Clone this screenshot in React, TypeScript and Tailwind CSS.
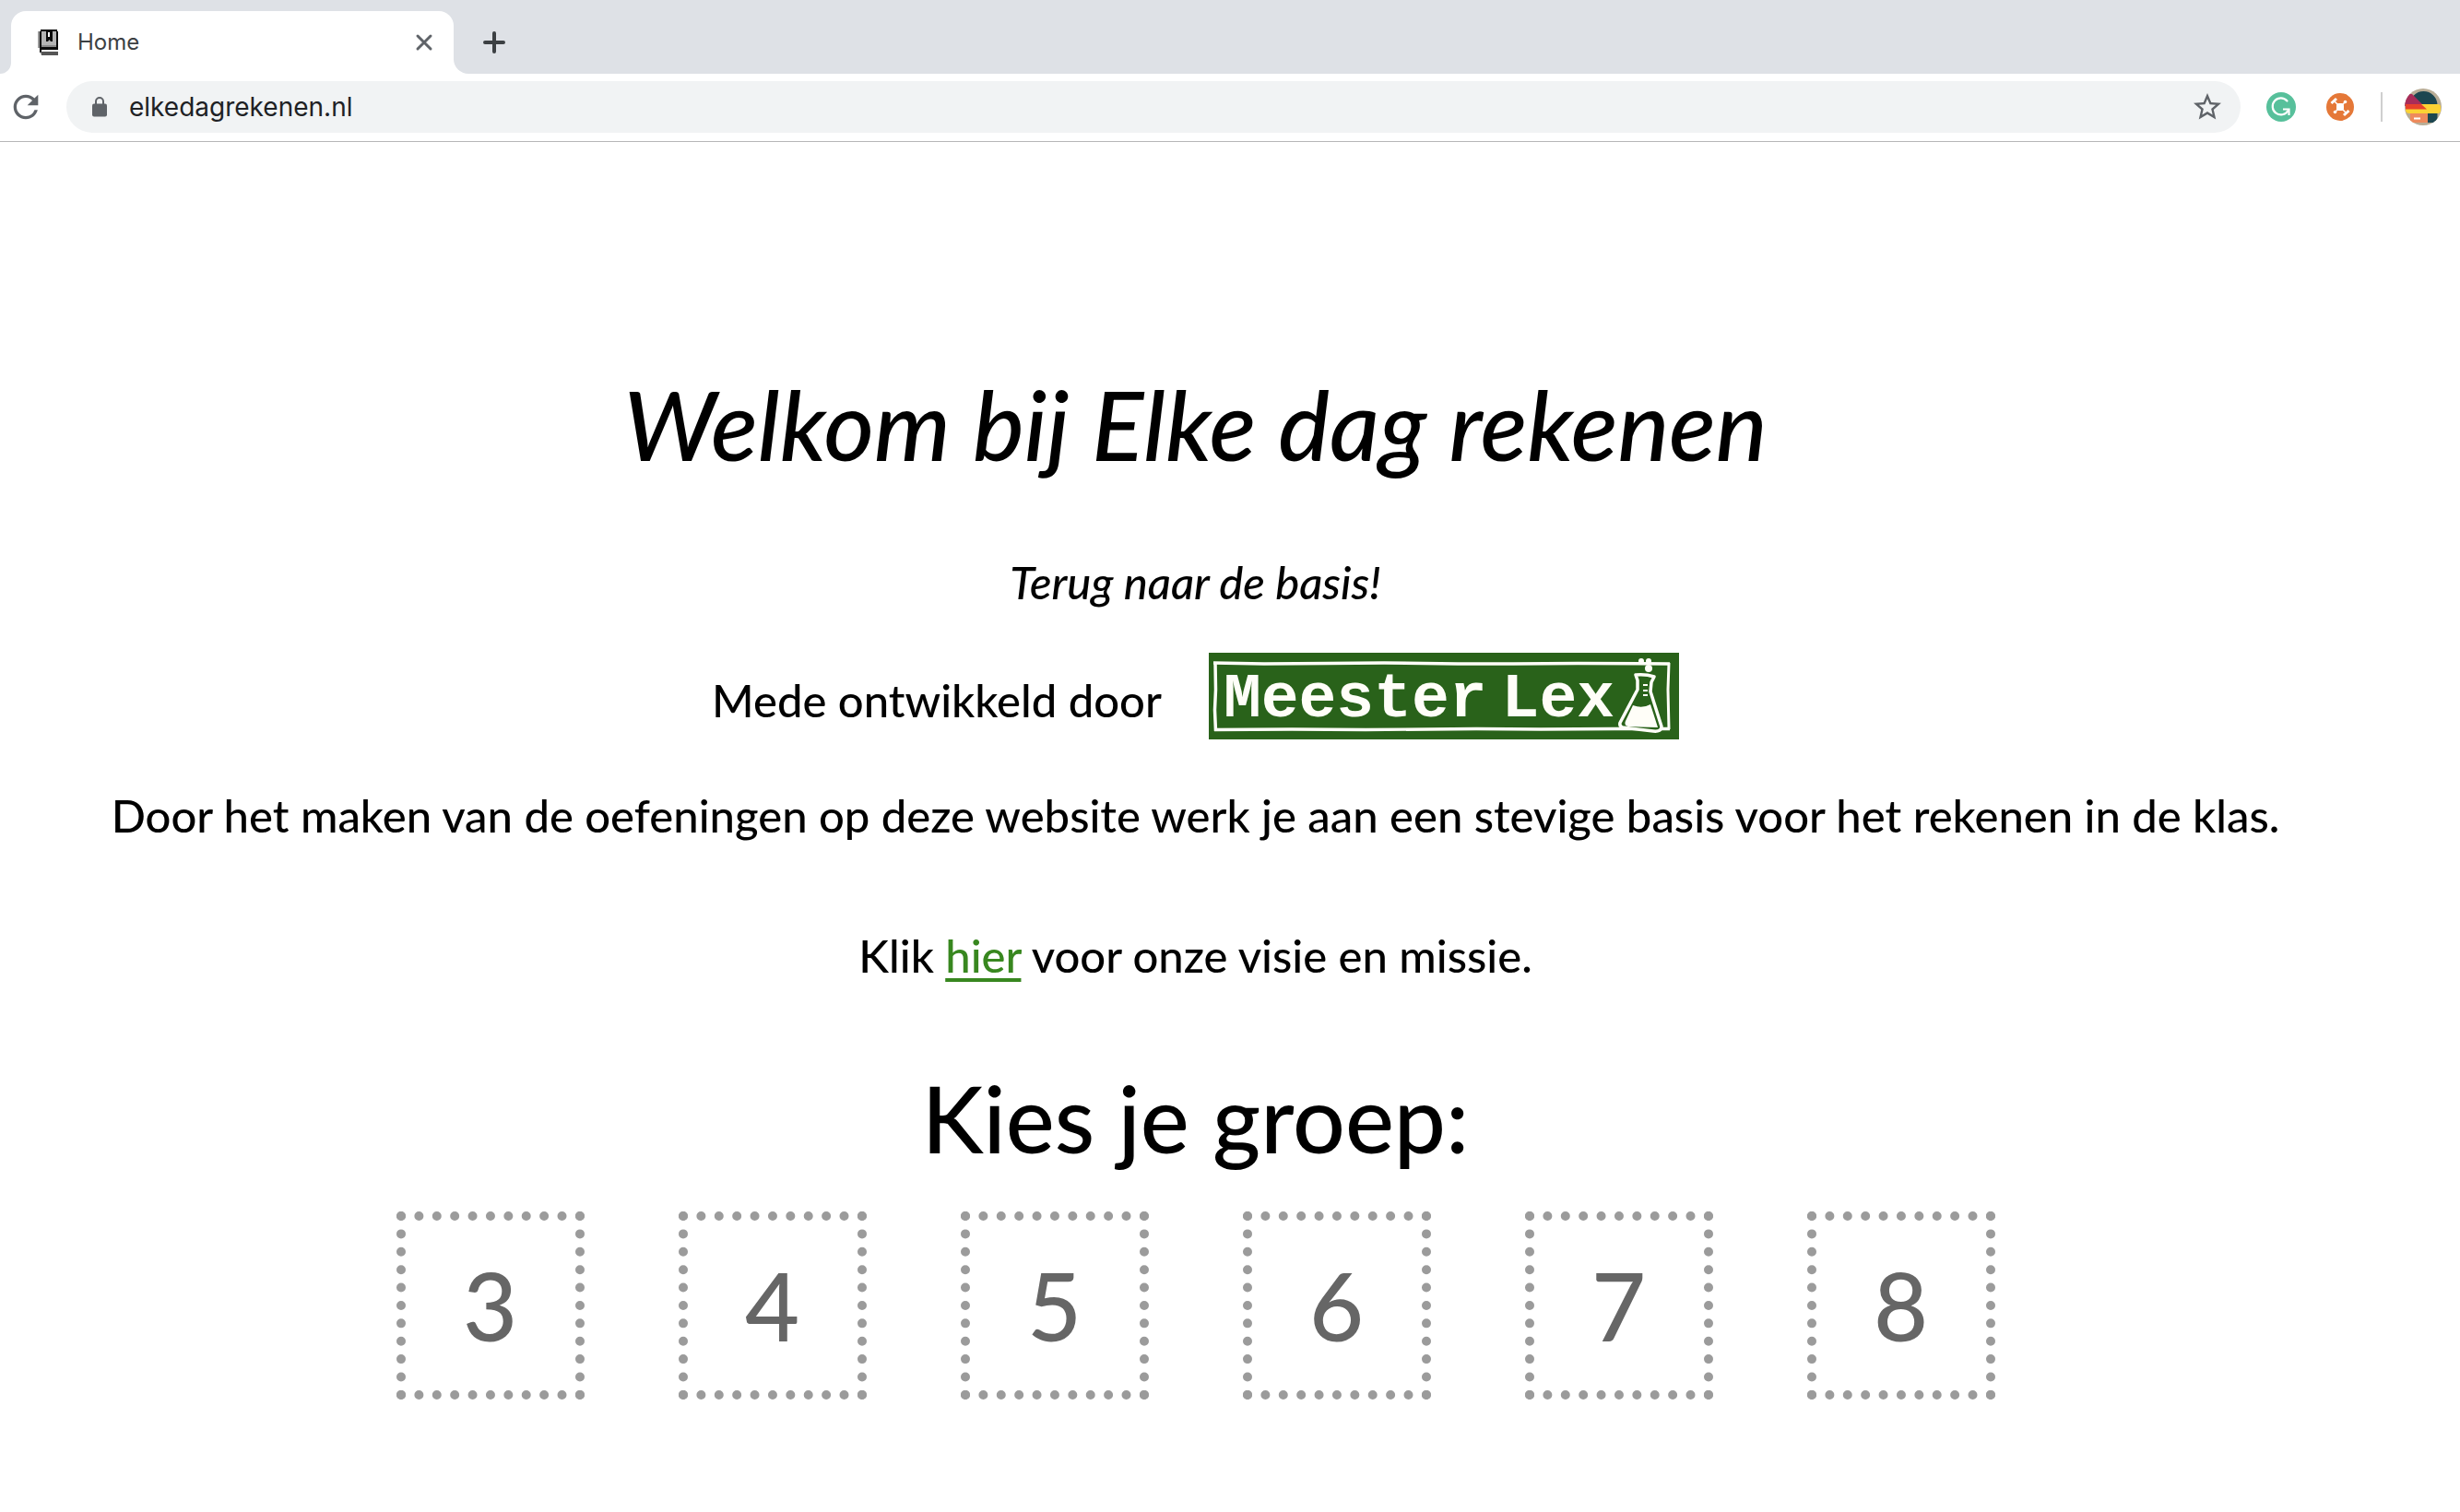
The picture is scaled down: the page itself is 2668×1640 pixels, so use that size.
import { MdRefresh, MdStarBorder } from "react-icons/md";

const groups = [3, 4, 5, 6, 7, 8];

function BookIcon() {
  return (
    <svg viewBox="0 0 24 28" className="h-7 w-6" aria-hidden="true">
      <path d="M1 2h2v18H1z" fill="#999" />
      <path d="M4 0h18v2h1v20H5v3H3V2h1z" fill="#0a0a0a" />
      <path d="M5 2h16v17H5z" fill="#b4b4b4" />
      <path d="M5 17h16v2H5z" fill="#8a8a8a" />
      <path d="M10 1h7v12h-2l-1.500-2-1.500 2h-2z" fill="#0a0a0a" />
      <path d="M12 3h2v5h-2z" fill="#fff" />
      <path d="M5 22h18v2H5z" fill="#f4f4f4" />
      <path d="M4 24h19v4H5z" fill="#555" />
    </svg>
  );
}

function LockIcon() {
  return (
    <svg viewBox="0 0 16 22" className="h-[22px] w-4 shrink-0" aria-hidden="true">
      <rect x="0" y="7.500" width="16" height="14" rx="2" fill="#5f6368" />
      <path d="M4 8V5a4 4 0 0 1 8 0v3" fill="none" stroke="#5f6368" strokeWidth="2" />
    </svg>
  );
}

function GrammarIcon() {
  return (
    <svg viewBox="0 0 32 32" className="size-8" aria-hidden="true">
      <circle cx="16" cy="16" r="16" fill="#57c09b" />
      <path d="M22.500 9.500A9 9 0 1 0 23.500 20" fill="none" stroke="#fff" strokeWidth="2.200" strokeLinecap="round" />
      <path d="M18 18.500h6.500V25" fill="none" stroke="#fff" strokeWidth="2.200" />
    </svg>
  );
}

function DroneIcon() {
  return (
    <svg viewBox="0 0 30 30" className="size-[30px]" aria-hidden="true">
      <circle cx="15" cy="15" r="15" fill="#e57838" />
      <path d="M8 8l14 14M20 10L10 20" stroke="#fff" strokeWidth="1.500" />
      <rect x="11" y="11" width="8" height="8" rx="2.500" fill="#fff" />
      <path d="M5.500 11l5.500-5M19 24l5.500-5" stroke="#fff" strokeWidth="3" />
      <circle cx="20.500" cy="9.500" r="1.800" fill="#fff" />
      <circle cx="9.500" cy="20.500" r="1.800" fill="#fff" />
    </svg>
  );
}

function Avatar() {
  return (
    <svg viewBox="0 0 40 40" className="size-10" aria-hidden="true">
      <defs>
        <clipPath id="avatar-circle">
          <circle cx="20" cy="20" r="20" />
        </clipPath>
      </defs>
      <g clipPath="url(#avatar-circle)">
        <rect width="40" height="40" fill="#b9ad96" />
        <path d="M5.500 18a15 15 0 0 1 30 0v19H24V18z" fill="#1c4650" />
        <path d="M6 25h19v12H6z" fill="#ee8a5c" />
        <path d="M0 6h8l13 13H0z" fill="#a92c59" />
        <path d="M5 17h31q3 0 3 3v4q0 3-3 3H5q-4 0-4-4v-2q0-4 4-4z" fill="#fbd234" />
        <path d="M1 17h17l6 5.500H1z" fill="#e8422b" />
        <path d="M10 32.500h7" stroke="#fff" strokeWidth="1.800" />
      </g>
    </svg>
  );
}

function MeesterLexLogo() {
  return (
    <a
      href="#meester-lex"
      className="relative flex h-[94px] w-[510px] items-center gap-4 bg-[#29621a] pt-2 pl-4 font-['Liberation_Mono',monospace] text-[68px] leading-none font-bold text-[#fffef8]"
    >
      <span>Meester</span>
      <span>Lex</span>
      <svg viewBox="0 0 510 94" className="absolute inset-0 h-full w-full" fill="none" stroke="#fffef8" aria-hidden="true">
        <path d="M5 11L60 12 130 11.500 190 11 270 12 330 12 400 11.500 500 12" strokeWidth="3.500" />
        <path d="M6 83.500L90 83 170 83.500 290 82.500 360 83 440 82.500 500 82.500" strokeWidth="3.500" />
        <path d="M7 10L7.500 40 6.500 62 7.500 85" strokeWidth="3.500" />
        <path d="M499 11L498 40 499 83" strokeWidth="3" />
        <path d="M463 24Q474 23 483 26L480 32 479 42 491 80Q491 86 482 85L449 81Q445 80 446 76L465 40 465 30Z" fill="#29621a" strokeWidth="3.500" strokeLinejoin="round" />
        <path d="M460 57Q470 61 479 56L487 81 455 80Q450 79 452 74Z" fill="#fffef8" stroke="none" />
        <path d="M471 35h5M471 41h5M471 46h5" strokeWidth="2" />
        <circle cx="477" cy="17" r="4" fill="#fffef8" stroke="none" />
        <circle cx="469" cy="9" r="3" fill="#fffef8" stroke="none" />
        <circle cx="477" cy="9" r="3" fill="#fffef8" stroke="none" />
      </svg>
    </a>
  );
}

export default function App() {
  return (
    <div className="min-h-screen bg-white">
      <header className="font-[Inter,sans-serif]">
        <div className="flex h-20 items-end bg-[#dee1e6]">
          <div className="flex h-[68px] w-3 bg-white">
            <div className="flex-1 rounded-br-[16px] bg-[#dee1e6]" />
          </div>
          <div className="flex h-[68px] w-[480px] items-center rounded-t-[16px] bg-white pr-[22px] pl-7">
            <BookIcon />
            <span className="ml-5 flex-1 text-2xl text-[#3c4043]">Home</span>
            <button type="button" aria-label="Sluit tabblad">
              <svg viewBox="0 0 20 20" className="size-5" stroke="#5f6368" strokeWidth="3" strokeLinecap="round">
                <path d="M3 3l14 14M17 3L3 17" />
              </svg>
            </button>
          </div>
          <div className="flex h-[68px] flex-1 bg-white">
            <div className="flex flex-1 items-center rounded-bl-[16px] bg-[#dee1e6] pl-8">
              <button type="button" aria-label="Nieuw tabblad">
                <svg viewBox="0 0 24 24" className="size-6" stroke="#3c4043" strokeWidth="4" strokeLinecap="round">
                  <path d="M12 2v20M2 12h20" />
                </svg>
              </button>
            </div>
          </div>
        </div>
        <div className="flex h-[74px] items-center border-b border-[#b6b6b8] pr-5 pb-px pl-2">
          <button type="button" aria-label="Vernieuwen">
            <MdRefresh className="size-10 text-[#5f6368]" />
          </button>
          <div className="ml-6 flex h-14 flex-1 items-center rounded-full bg-[#f1f3f4] pr-[18px] pl-7">
            <LockIcon />
            <input
              type="text"
              aria-label="Adres"
              defaultValue="elkedagrekenen.nl"
              className="ml-6 min-w-0 flex-1 bg-transparent text-[28px] text-[#202124] outline-none"
            />
            <button type="button" aria-label="Bladwijzer">
              <MdStarBorder className="size-9 text-[#5f6368]" />
            </button>
          </div>
          <button type="button" aria-label="Schrijfhulp" className="ml-7">
            <GrammarIcon />
          </button>
          <button type="button" aria-label="Extensie" className="ml-[33px]">
            <DroneIcon />
          </button>
          <div className="ml-[29px] h-8 w-[2px] bg-[#cfcfcf]" />
          <button type="button" aria-label="Profiel" className="ml-6">
            <Avatar />
          </button>
        </div>
      </header>

      <main className="flex flex-col items-center pr-[75px] text-center font-[Lato,sans-serif] text-[49px] leading-[62px] font-medium text-black">
        <h1 className="mt-[244px] text-[105px] leading-[122px] italic">Welkom bij Elke dag rekenen</h1>
        <p className="mt-20 italic">Terug naar de basis!</p>
        <div className="mt-[46px] flex items-center gap-[51px]">
          <p className="pt-2">Mede ontwikkeld door</p>
          <MeesterLexLogo />
        </div>
        <p className="mt-[51px]">
          Door het maken van de oefeningen op deze website werk je aan een stevige basis voor het rekenen in de klas.
        </p>
        <p className="mt-[90px]">
          Klik{" "}
          <a href="#visie" className="text-[#38871f] underline decoration-4 underline-offset-6">
            hier
          </a>{" "}
          voor onze visie en missie.
        </p>
        <h2 className="mt-[84px] text-[100px] leading-[122px]">Kies je groep:</h2>
        <nav aria-label="Groepen" className="mt-[41px] flex gap-[102px]">
          {groups.map((group) => (
            <a
              key={group}
              href={`#groep-${group}`}
              className="flex size-[204px] items-center justify-center border-[10px] border-dotted border-[#9b9b9b] text-[102px] text-[#666]"
            >
              {group}
            </a>
          ))}
        </nav>
      </main>
    </div>
  );
}
